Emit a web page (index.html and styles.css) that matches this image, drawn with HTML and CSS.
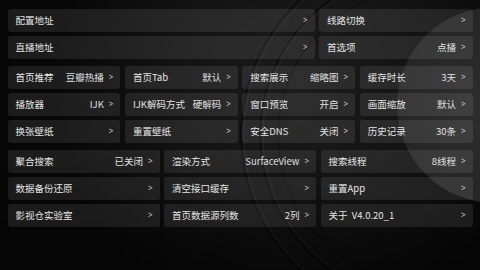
FILE: index.html
```html
<!DOCTYPE html>
<html lang="zh-CN">
<head>
<meta charset="utf-8">
<title>设置</title>
<link rel="stylesheet" href="styles.css">
</head>
<body>
<div class="screen">
  <svg class="backdrop" viewBox="0 0 480 270" preserveAspectRatio="none" aria-hidden="true">
    <defs>
      <radialGradient id="glow" cx="300" cy="80" r="250" gradientUnits="userSpaceOnUse">
        <stop offset="0" stop-color="#1c1c1c"/>
        <stop offset="0.55" stop-color="#121212"/>
        <stop offset="1" stop-color="#070707"/>
      </radialGradient>
      <radialGradient id="disc" cx="485" cy="110" r="100" gradientUnits="userSpaceOnUse">
        <stop offset="0" stop-color="#2e2e2e"/>
        <stop offset="1" stop-color="#252525"/>
      </radialGradient>
      <linearGradient id="fade" x1="0" y1="0" x2="0" y2="1">
        <stop offset="0" stop-color="#000" stop-opacity="0"/>
        <stop offset="1" stop-color="#000" stop-opacity="0.35"/>
      </linearGradient>
    </defs>
    <rect width="480" height="270" fill="url(#glow)"/>
    <rect y="140" width="480" height="130" fill="url(#fade)"/>
    <g fill="none">
      <circle cx="425" cy="135" r="184" stroke="#000" stroke-opacity="0.55" stroke-width="1.5"/>
      <circle cx="425" cy="135" r="181" stroke="#fff" stroke-opacity="0.05" stroke-width="1"/>
      <circle cx="425" cy="135" r="165" stroke="#000" stroke-opacity="0.5" stroke-width="1.5"/>
      <circle cx="425" cy="135" r="162" stroke="#fff" stroke-opacity="0.05" stroke-width="1"/>
      <circle cx="425" cy="135" r="147" stroke="#000" stroke-opacity="0.4" stroke-width="1.2"/>
    </g>
    <circle cx="495" cy="105" r="98" fill="url(#disc)"/>
  </svg>

  <main class="settings">
    <section class="grid cols-wide">
      <div class="item"><span class="label">配置地址</span><span class="arrow">&gt;</span></div>
      <div class="item"><span class="label">线路切换</span><span class="arrow">&gt;</span></div>
      <div class="item"><span class="label">直播地址</span><span class="arrow">&gt;</span></div>
      <div class="item"><span class="label">首选项</span><span class="value">点播</span><span class="arrow">&gt;</span></div>
    </section>

    <section class="grid cols-4">
      <div class="item"><span class="label">首页推荐</span><span class="value">豆瓣热播</span><span class="arrow">&gt;</span></div>
      <div class="item"><span class="label">首页Tab</span><span class="value">默认</span><span class="arrow">&gt;</span></div>
      <div class="item"><span class="label">搜索展示</span><span class="value">缩略图</span><span class="arrow">&gt;</span></div>
      <div class="item"><span class="label">缓存时长</span><span class="value">3天</span><span class="arrow">&gt;</span></div>
      <div class="item"><span class="label">播放器</span><span class="value">IJK</span><span class="arrow">&gt;</span></div>
      <div class="item"><span class="label">IJK解码方式</span><span class="value">硬解码</span><span class="arrow">&gt;</span></div>
      <div class="item"><span class="label">窗口预览</span><span class="value">开启</span><span class="arrow">&gt;</span></div>
      <div class="item"><span class="label">画面缩放</span><span class="value">默认</span><span class="arrow">&gt;</span></div>
      <div class="item"><span class="label">换张壁纸</span><span class="arrow">&gt;</span></div>
      <div class="item"><span class="label">重置壁纸</span><span class="arrow">&gt;</span></div>
      <div class="item"><span class="label">安全DNS</span><span class="value">关闭</span><span class="arrow">&gt;</span></div>
      <div class="item"><span class="label">历史记录</span><span class="value">30条</span><span class="arrow">&gt;</span></div>
    </section>

    <section class="grid cols-3">
      <div class="item"><span class="label">聚合搜索</span><span class="value">已关闭</span><span class="arrow">&gt;</span></div>
      <div class="item"><span class="label">渲染方式</span><span class="value">SurfaceView</span><span class="arrow">&gt;</span></div>
      <div class="item"><span class="label">搜索线程</span><span class="value">8线程</span><span class="arrow">&gt;</span></div>
      <div class="item"><span class="label">数据备份还原</span><span class="arrow">&gt;</span></div>
      <div class="item"><span class="label">清空接口缓存</span><span class="arrow">&gt;</span></div>
      <div class="item"><span class="label">重置App</span><span class="arrow">&gt;</span></div>
      <div class="item"><span class="label">影视仓实验室</span><span class="arrow">&gt;</span></div>
      <div class="item"><span class="label">首页数据源列数</span><span class="value">2列</span><span class="arrow">&gt;</span></div>
      <div class="item"><span class="label">关于&nbsp;&nbsp;V4.0.20_1</span><span class="arrow">&gt;</span></div>
    </section>
  </main>
</div>
</body>
</html>
```

FILE: styles.css
```css
* {
  box-sizing: border-box;
}

html, body {
  margin: 0;
  padding: 0;
  background: #0d0d0d;
}

.screen {
  position: relative;
  width: 480px;
  height: 270px;
  overflow: hidden;
  font-family: "Noto Sans CJK SC", "Noto Sans", Roboto, sans-serif;
  color: #e4e4e4;
}

.backdrop {
  position: absolute;
  left: 0;
  top: 0;
  width: 480px;
  height: 270px;
}

.settings {
  position: relative;
  padding: 9px 7.5px 0 7.5px;
  display: flex;
  flex-direction: column;
  gap: 7.5px;
}

.grid {
  display: grid;
  grid-auto-rows: 22.5px;
  column-gap: 4.5px;
  row-gap: 4.5px;
}

.cols-wide {
  grid-template-columns: 2fr 1fr;
}

.cols-4 {
  grid-template-columns: repeat(4, 1fr);
}

.cols-3 {
  grid-template-columns: repeat(3, 1fr);
}

.item {
  display: flex;
  align-items: center;
  padding: 0 7px 0 8px;
  border-radius: 3px;
  background: rgba(255, 255, 255, 0.085);
  font-size: 9.5px;
  line-height: 1;
  white-space: nowrap;
  min-width: 0;
}

.label {
  flex: 1 1 auto;
  color: #e6e6e6;
}

.value {
  color: #e0e0e0;
}

.arrow {
  margin-left: 5px;
  font-family: "Noto Sans", sans-serif;
  font-size: 8px;
  color: #d0d0d0;
}
```
